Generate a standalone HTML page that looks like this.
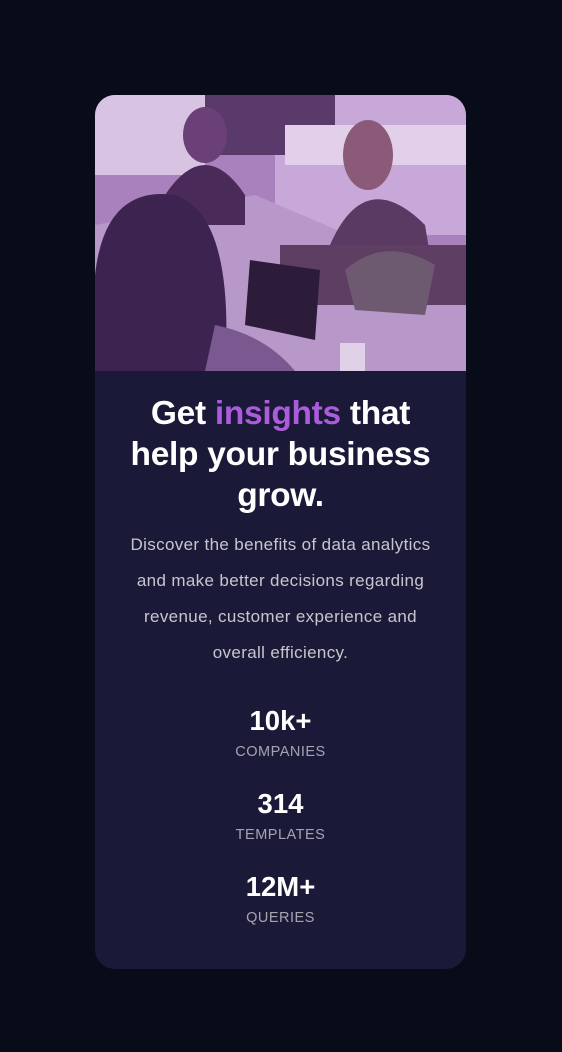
<!DOCTYPE html>
<html><head><meta charset="utf-8"><style>
*{margin:0;padding:0;box-sizing:border-box}
body{width:562px;height:1052px;background:#080b18;font-family:"Liberation Sans",sans-serif;position:relative;overflow:hidden}
.card{position:absolute;left:95px;top:95px;width:371px;height:874px;background:#1b1938;border-radius:20px;overflow:hidden;text-align:center}
.img{height:276px;width:371px;display:block}
h1{color:#fff;font-size:33.5px;line-height:41px;font-weight:bold;margin-top:22px;letter-spacing:-0.3px;white-space:nowrap}
h1 span{color:#aa5cdb}
p{color:rgba(255,255,255,0.75);font-size:17px;letter-spacing:0.35px;line-height:36px;margin-top:11px;white-space:nowrap}
.n{color:#fff;font-size:27.5px;font-weight:bold;line-height:30px}
.l{color:rgba(255,255,255,0.6);font-size:14.5px;letter-spacing:0.5px;line-height:18px;margin-top:7px}
</style></head><body>
<div class="card">
<svg class="img" viewBox="0 0 371 276">
<rect width="371" height="276" fill="#a982bd"/>
<rect x="180" y="0" width="191" height="140" fill="#c7a8d8"/>
<rect x="110" y="0" width="130" height="60" fill="#5a3a6a"/>
<rect x="0" y="0" width="110" height="80" fill="#d8c3e2"/>
<rect x="190" y="30" width="181" height="40" fill="#e2d0ea"/>
<polygon points="0,130 160,100 371,190 371,276 0,276" fill="#b898c8"/>
<ellipse cx="110" cy="40" rx="22" ry="28" fill="#6b4078"/>
<path d="M70 100 Q110 40 150 100 L150 130 L70 130Z" fill="#4a2a58"/>
<ellipse cx="273" cy="60" rx="25" ry="35" fill="#8a5a78"/>
<path d="M235 150 Q270 70 330 130 L335 160 L235 165Z" fill="#5a3a62"/>
<rect x="185" y="150" width="186" height="60" fill="#5e3e62"/>
<path d="M0 276 L0 180 Q10 90 80 100 Q140 120 130 276Z" fill="#3d2450"/>
<polygon points="155,165 225,175 220,245 150,230" fill="#2c1c3a"/>
<path d="M120 230 Q170 240 200 276 L110 276Z" fill="#7a5890"/>
<rect x="245" y="248" width="25" height="28" fill="#e0d0e8"/>
<path d="M250 175 Q290 140 340 170 L330 220 L260 215Z" fill="#6e5a70"/>
</svg>
<h1>Get <span>insights</span> that<br>help your business<br>grow.</h1>
<p>Discover the benefits of data analytics<br>and make better decisions regarding<br>revenue, customer experience and<br>overall efficiency.</p>
<div style="margin-top:35px">
<div class="n">10k+</div><div class="l">COMPANIES</div>
<div class="n" style="margin-top:28px">314</div><div class="l">TEMPLATES</div>
<div class="n" style="margin-top:28px">12M+</div><div class="l">QUERIES</div>
</div>
</div>
</body></html>
